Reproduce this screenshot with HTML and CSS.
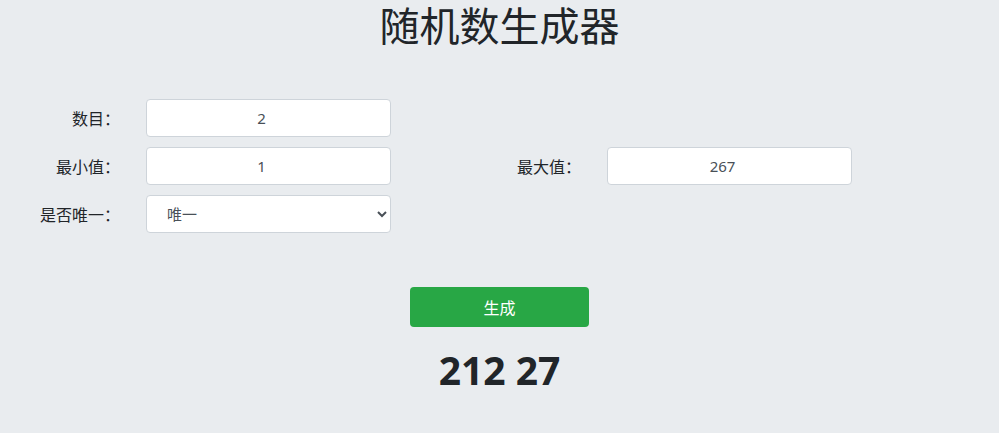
FILE: index.html
```html
<!DOCTYPE html>
<html lang="zh-CN">
<head>
    <meta charset="UTF-8">
    <meta name="viewport" content="width=device-width, initial-scale=1.0">
    <title>随机数生成器</title>
    <link rel="stylesheet" href="styles.css">
</head>
<body>
<h1 class="title">随机数生成器</h1>

<form class="gen-form" onsubmit="generate(); return false;">
    <div class="form-row">
        <div class="field">
            <label for="count">数目：</label>
            <input type="text" id="count" value="2">
        </div>
    </div>
    <div class="form-row">
        <div class="field">
            <label for="min">最小值：</label>
            <input type="text" id="min" value="1">
        </div>
        <div class="field">
            <label for="max">最大值：</label>
            <input type="text" id="max" value="267">
        </div>
    </div>
    <div class="form-row">
        <div class="field">
            <label for="unique">是否唯一：</label>
            <select id="unique">
                <option value="1">唯一</option>
                <option value="0">不唯一</option>
            </select>
        </div>
    </div>

    <div class="actions">
        <button type="submit" class="btn-generate">生成</button>
    </div>
</form>

<p id="result" class="result">212 27</p>

<script>
    function generate() {
        var count = parseInt(document.getElementById("count").value) || 0;
        var min = parseInt(document.getElementById("min").value) || 0;
        var max = parseInt(document.getElementById("max").value) || 0;
        var unique = document.getElementById("unique").value === "1";
        var nums = [];

        // stop if unique numbers can't fill the count
        if (unique && count > max - min + 1) {
            count = max - min + 1;
        }

        while (nums.length < count) {
            var n = Math.floor(Math.random() * (max - min + 1)) + min;
            if (unique && nums.indexOf(n) !== -1) continue;
            nums.push(n);
        }

        document.getElementById("result").textContent = nums.join(" ");
    }
</script>
</body>
</html>
```

FILE: styles.css
```css
body {
    font-family: "Noto Sans", "Noto Sans CJK SC", sans-serif;
    background-color: #e9ecef;
    color: #212529;
    margin: 0;
    padding: 0;
}

.title {
    font-family: "Liberation Sans", "Noto Sans CJK SC", sans-serif;
    text-align: center;
    font-size: 40px;
    font-weight: normal;
    line-height: 50px;
    margin: 0;
    padding-top: 2px;
}

.gen-form {
    margin-top: 47px;
}

.form-row {
    display: flex;
    margin-bottom: 10px;
    padding-left: 10px;
}

.field {
    display: flex;
    align-items: center;
    width: 461px;
}

.field label {
    width: 110px;
    text-align: right;
    font-size: 16px;
    margin-right: 26px;
}

.field input,
.field select {
    width: 245px;
    height: 38px;
    box-sizing: border-box;
    border: 1px solid #ced4da;
    border-radius: 4px;
    background-color: #fff;
    color: #495057;
    font-family: inherit;
    font-size: 15px;
}

.field input {
    text-align: center;
    padding: 0 26px 0 12px;
}

.field select {
    padding: 0 8px 0 16px;
}

.actions {
    display: flex;
    justify-content: center;
    margin-top: 54px;
}

.btn-generate {
    width: 179px;
    height: 40px;
    background-color: #28a745;
    color: #fff;
    border: none;
    border-radius: 4px;
    font-family: inherit;
    font-size: 16px;
    cursor: pointer;
}

.btn-generate:hover {
    background-color: #218838;
}

.result {
    text-align: center;
    font-size: 39px;
    font-weight: bold;
    line-height: 48px;
    margin: 19px 0 0;
}
```
